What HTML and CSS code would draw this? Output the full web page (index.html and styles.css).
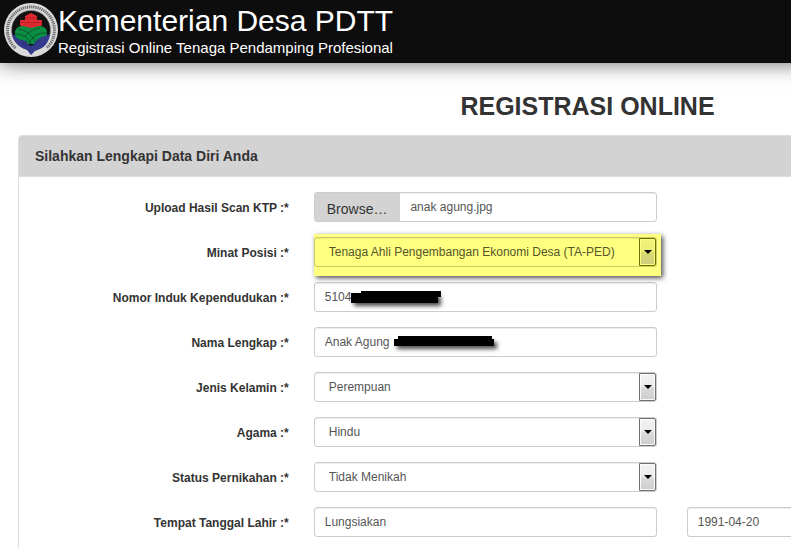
FILE: index.html
```html
<!DOCTYPE html>
<html lang="id">
<head>
<meta charset="utf-8">
<title>Registrasi Online - Kementerian Desa PDTT</title>
<link rel="stylesheet" href="styles.css">
</head>
<body>
<header class="topbar">
  <svg class="logo" viewBox="0 0 56 56" aria-hidden="true">
    <circle cx="29" cy="28" r="27" fill="#dadada"/>
    <path d="M13.500 46 A23.500 23.500 0 1 1 44.500 46" fill="none" stroke="#6c6c70" stroke-width="3" stroke-dasharray="1.300 .8"/>
    <circle cx="29" cy="28" r="19.500" fill="#111" stroke="#888" stroke-width=".7"/>
    <path d="M18 23v-5h5v-4l6-3 6 3v4h5v5l-3 3H21z" fill="#df2830"/>
    <path d="M18 20.500h22M23 16h12" stroke="#a32127" stroke-width=".7"/>
    <path d="M13 29q2-5 8-5l8 2 8-2q6 0 8 5v8L34 42H24L13 37z" fill="#098e43"/>
    <path d="M13 32q12 0 16 10M16 27q13 2 18 14M45 31q-13-1-18 10M38 26q-9 1-15 8" fill="none" stroke="#0a4a28" stroke-width=".8"/>
    <path d="M10 32c3 1 4 3 6 5l8 2 4 5 3-1 5-6c3-2 6-2 9-4l3-1c-1 8-5 13-10 15l-5 2-4 4-4-5C16 45 11 39 10 32z" fill="#343a8c"/>
    <path d="M19 39l6 5M37 38l-6 6" stroke="#202661" stroke-width=".8"/>
  </svg>
  <div class="brand">
    <div class="brand-name">Kementerian Desa PDTT</div>
    <div class="brand-sub">Registrasi Online Tenaga Pendamping Profesional</div>
  </div>
</header>
<main class="page">
  <h1 class="page-title">REGISTRASI ONLINE</h1>
  <section class="panel">
    <h2 class="panel-heading">Silahkan Lengkapi Data Diri Anda</h2>
    <form class="panel-body">
      <div class="row">
        <label class="row-label" for="ktp">Upload Hasil Scan KTP :*</label>
        <div class="cell">
          <div class="control file">
            <span class="file-button">Browse…</span>
            <span class="file-name">anak agung.jpg</span>
            <input class="file-input" type="file" id="ktp">
          </div>
        </div>
      </div>
      <div class="row">
        <label class="row-label" for="posisi">Minat Posisi :*</label>
        <div class="cell">
          <div class="select marked">
            <select class="control" id="posisi"><option>Tenaga Ahli Pengembangan Ekonomi Desa (TA-PED)</option></select>
          </div>
        </div>
      </div>
      <div class="row">
        <label class="row-label" for="nik">Nomor Induk Kependudukan :*</label>
        <div class="cell">
          <input class="control" type="text" id="nik" value="5104">
          <span class="redaction redaction-nik"></span>
        </div>
      </div>
      <div class="row">
        <label class="row-label" for="nama">Nama Lengkap :*</label>
        <div class="cell">
          <input class="control" type="text" id="nama" value="Anak Agung">
          <span class="redaction redaction-name"></span>
        </div>
      </div>
      <div class="row">
        <label class="row-label" for="kelamin">Jenis Kelamin :*</label>
        <div class="cell">
          <div class="select"><select class="control" id="kelamin"><option>Perempuan</option></select></div>
        </div>
      </div>
      <div class="row">
        <label class="row-label" for="agama">Agama :*</label>
        <div class="cell">
          <div class="select"><select class="control" id="agama"><option>Hindu</option></select></div>
        </div>
      </div>
      <div class="row">
        <label class="row-label" for="status">Status Pernikahan :*</label>
        <div class="cell">
          <div class="select"><select class="control" id="status"><option>Tidak Menikah</option></select></div>
        </div>
      </div>
      <div class="row">
        <label class="row-label" for="lahir">Tempat Tanggal Lahir :*</label>
        <div class="cell"><input class="control" type="text" id="lahir" value="Lungsiakan"></div>
        <div class="cell"><input class="control" type="text" aria-label="Tanggal Lahir" value="1991-04-20"></div>
      </div>
    </form>
  </section>
</main>
</body>
</html>
```
FILE: styles.css
```css
*,
*::before {
  box-sizing: border-box;
}

html {
  overflow: hidden;
}

body {
  margin: 0;
  background: #fff;
  color: #333;
  font-family: "Liberation Sans", Arial, sans-serif;
  font-size: 12px;
}

.topbar {
  display: flex;
  align-items: flex-start;
  min-width: 1175px;
  height: 63px;
  padding: 2px;
  background: #0d0d0d;
  color: #fff;
  box-shadow: 0 0 20px rgba(0, 0, 0, 0.6);
}

.logo {
  width: 56px;
  height: 56px;
}

.brand-name {
  padding-top: 2px;
  font-size: 30px;
  line-height: 34px;
}

.brand-sub {
  font-size: 15px;
  line-height: 20px;
}

.page {
  min-width: 1175px;
  padding: 28px 18px 0;
}

.page-title {
  margin: 0 0 14px;
  font-size: 25px;
  line-height: 30px;
  text-align: center;
}

.panel {
  border: 1px solid #ddd;
  border-radius: 4px;
}

.panel-heading {
  margin: 0;
  padding: 10px 16px;
  border-bottom: 1px solid #ddd;
  border-radius: 3px 3px 0 0;
  background: #d3d3d3;
  font-size: 14px;
  line-height: 20px;
}

.panel-body {
  display: flex;
  flex-direction: column;
  gap: 15px;
  padding: 15px 18px 15px 0;
}

.row {
  display: flex;
}

.row-label {
  flex: 0 0 25%;
  padding-right: 10px;
  font-weight: bold;
  line-height: 32px;
  height: 30px;
  text-align: right;
}

.cell {
  position: relative;
  flex: 0 0 calc(100% / 3);
  padding: 0 15px;
}

.control {
  display: block;
  width: 100%;
  height: 30px;
  margin: 0;
  padding: 0 10px;
  border: 1px solid #ccc;
  border-radius: 3px;
  background: #fff;
  box-shadow: inset 0 1px 1px rgba(0, 0, 0, 0.075);
  color: #555;
  font-family: inherit;
  font-size: 12px;
  line-height: 28px;
  appearance: none;
}

.file {
  position: relative;
  display: flex;
  padding: 0;
  overflow: hidden;
}

.file-button {
  padding: 2px 13px 0 12px;
  background: #d3d3d3;
  color: #333;
  font-size: 14px;
}

.file-name {
  padding-left: 10px;
}

.file-input {
  position: absolute;
  inset: 0;
  width: 100%;
  opacity: 0;
}

.select {
  position: relative;
}

.select .control {
  padding: 0 18px 0 14px;
}

.select::before {
  content: "";
  position: absolute;
  top: 1px;
  right: 1px;
  width: 17px;
  height: 28px;
  border: 1px solid #707070;
  border-radius: 0 2px 2px 0;
  background: linear-gradient(#f3f3f3, #ebebeb 50%, #dcdcdc 50%, #cdcdcd);
  box-shadow: inset 0 0 0 1px #fbfbfb;
  pointer-events: none;
}

.select::after {
  content: "";
  position: absolute;
  top: 13px;
  right: 5px;
  border: solid transparent;
  border-width: 4px 4px 0;
  border-top-color: #000;
  pointer-events: none;
}

.marked {
  z-index: 1;
  margin: -3px -4px -9px 0;
  padding: 3px 4px 9px 0;
  background: #ffff80;
  box-shadow: 2px 2px 5px rgba(0, 0, 0, 0.7);
}

.marked .control {
  border-color: #cccc66;
  background: #ffff80;
  color: #55552b;
}

.marked::before {
  top: 4px;
  right: 5px;
  border-color: #707000;
  background: linear-gradient(#f3f37a, #ebeb76 50%, #dcdc6e 50%, #cdcd80);
  box-shadow: inset 0 0 0 1px #fbfb7e;
}

.marked::after {
  top: 16px;
  right: 9px;
}

.redaction {
  position: absolute;
  background: #000;
  box-shadow: 3px 3px 4px rgba(0, 0, 0, 0.7);
}

.redaction-nik {
  top: 11px;
  left: 52px;
  width: 87px;
  height: 10px;
}

.redaction-nik::before {
  content: "";
  position: absolute;
  top: -2px;
  left: 10px;
  width: 80px;
  height: 6px;
  background: #000;
}

.redaction-name {
  top: 12px;
  left: 95px;
  width: 100px;
  height: 7px;
}

.redaction-name::before {
  content: "";
  position: absolute;
  top: -3px;
  left: 4px;
  width: 94px;
  height: 10px;
  background: #000;
}
```
